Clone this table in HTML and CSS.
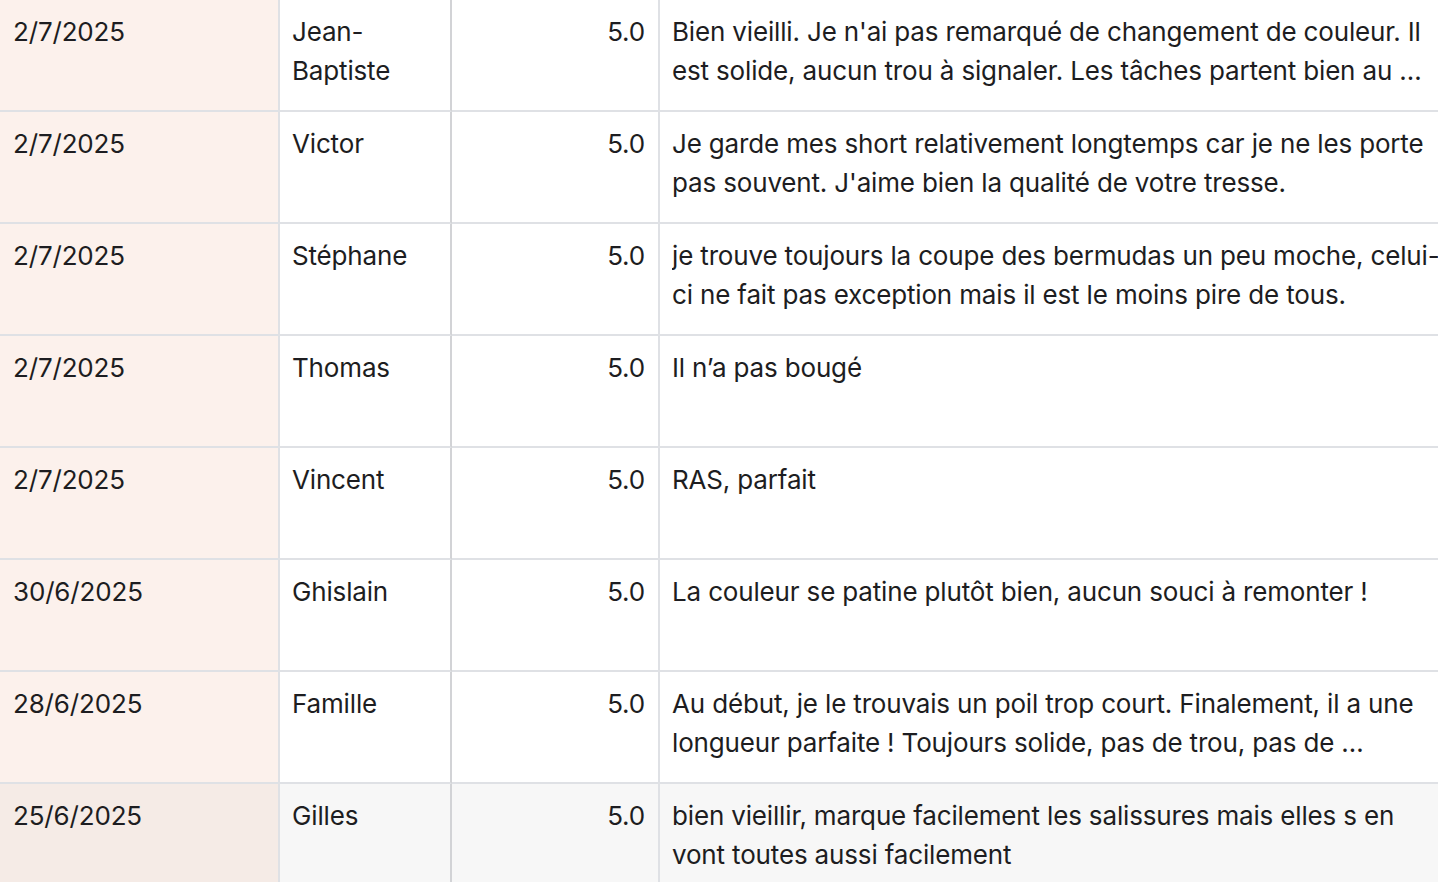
FILE: index.html
```html
<!DOCTYPE html>
<html lang="fr">
<head>
<meta charset="utf-8">
<title>Avis</title>
<link rel="stylesheet" href="styles.css">
</head>
<body>
<div class="table">
  <div class="row">
    <div class="cell date">2/7/2025</div>
    <div class="cell name">Jean-Baptiste</div>
    <div class="cell score">5.0</div>
    <div class="cell comment"><span class="clamp">Bien vieilli. Je n'ai pas remarqué de changement de couleur. Il est solide, aucun trou à signaler. Les tâches partent bien au …</span></div>
  </div>
  <div class="row">
    <div class="cell date">2/7/2025</div>
    <div class="cell name">Victor</div>
    <div class="cell score">5.0</div>
    <div class="cell comment"><span class="clamp">Je garde mes short relativement longtemps car je ne les porte pas souvent. J'aime bien la qualité de votre tresse.</span></div>
  </div>
  <div class="row">
    <div class="cell date">2/7/2025</div>
    <div class="cell name">Stéphane</div>
    <div class="cell score">5.0</div>
    <div class="cell comment"><span class="clamp">je trouve toujours la coupe des bermudas un peu moche, celui-ci ne fait pas exception mais il est le moins pire de tous.</span></div>
  </div>
  <div class="row">
    <div class="cell date">2/7/2025</div>
    <div class="cell name">Thomas</div>
    <div class="cell score">5.0</div>
    <div class="cell comment"><span class="clamp">Il n’a pas bougé</span></div>
  </div>
  <div class="row">
    <div class="cell date">2/7/2025</div>
    <div class="cell name">Vincent</div>
    <div class="cell score">5.0</div>
    <div class="cell comment"><span class="clamp">RAS, parfait</span></div>
  </div>
  <div class="row">
    <div class="cell date">30/6/2025</div>
    <div class="cell name">Ghislain</div>
    <div class="cell score">5.0</div>
    <div class="cell comment"><span class="clamp">La couleur se patine plutôt bien, aucun souci à remonter !</span></div>
  </div>
  <div class="row">
    <div class="cell date">28/6/2025</div>
    <div class="cell name">Famille</div>
    <div class="cell score">5.0</div>
    <div class="cell comment"><span class="clamp">Au début, je le trouvais un poil trop court. Finalement, il a une longueur parfaite ! Toujours solide, pas de trou, pas de …</span></div>
  </div>
  <div class="row hover">
    <div class="cell date">25/6/2025</div>
    <div class="cell name">Gilles</div>
    <div class="cell score">5.0</div>
    <div class="cell comment"><span class="clamp">bien vieillir, marque facilement les salissures mais elles s en vont toutes aussi facilement</span></div>
  </div>
</div>
</body>
</html>
```

FILE: styles.css
```css
html, body {
  margin: 0;
  padding: 0;
  background: #ffffff;
  overflow: hidden;
}

body {
  width: 1438px;
  height: 882px;
  font-family: Inter, "Noto Sans", "Liberation Sans", sans-serif;
  font-size: 26px;
  line-height: 39px;
  letter-spacing: -0.16px;
  font-variant-numeric: proportional-nums;
  color: #1d1d21;
}

.table {
  display: flex;
  flex-direction: column;
  width: 1480px;
}

.row {
  display: grid;
  grid-template-columns: 280px 172px 208px 800px;
}

.cell {
  box-sizing: border-box;
  height: 112px;
  padding: 12px 12px 0 12px;
  border-bottom: 2px solid #dfe1e5;
  border-right: 2px solid #dfe1e5;
  overflow: hidden;
}

.date {
  background: #fcf1ec;
  padding-left: 13px;
}

.name {
  border-right-color: #d2d3d6;
}

.score {
  text-align: right;
  padding-right: 13px;
}

.comment {
  padding-right: 10px;
}

.clamp {
  display: -webkit-box;
  -webkit-box-orient: vertical;
  -webkit-line-clamp: 2;
  overflow: hidden;
}

.row.hover .cell {
  background: #f7f7f7;
}

.row.hover .date {
  background: #f5ebe6;
}
```
